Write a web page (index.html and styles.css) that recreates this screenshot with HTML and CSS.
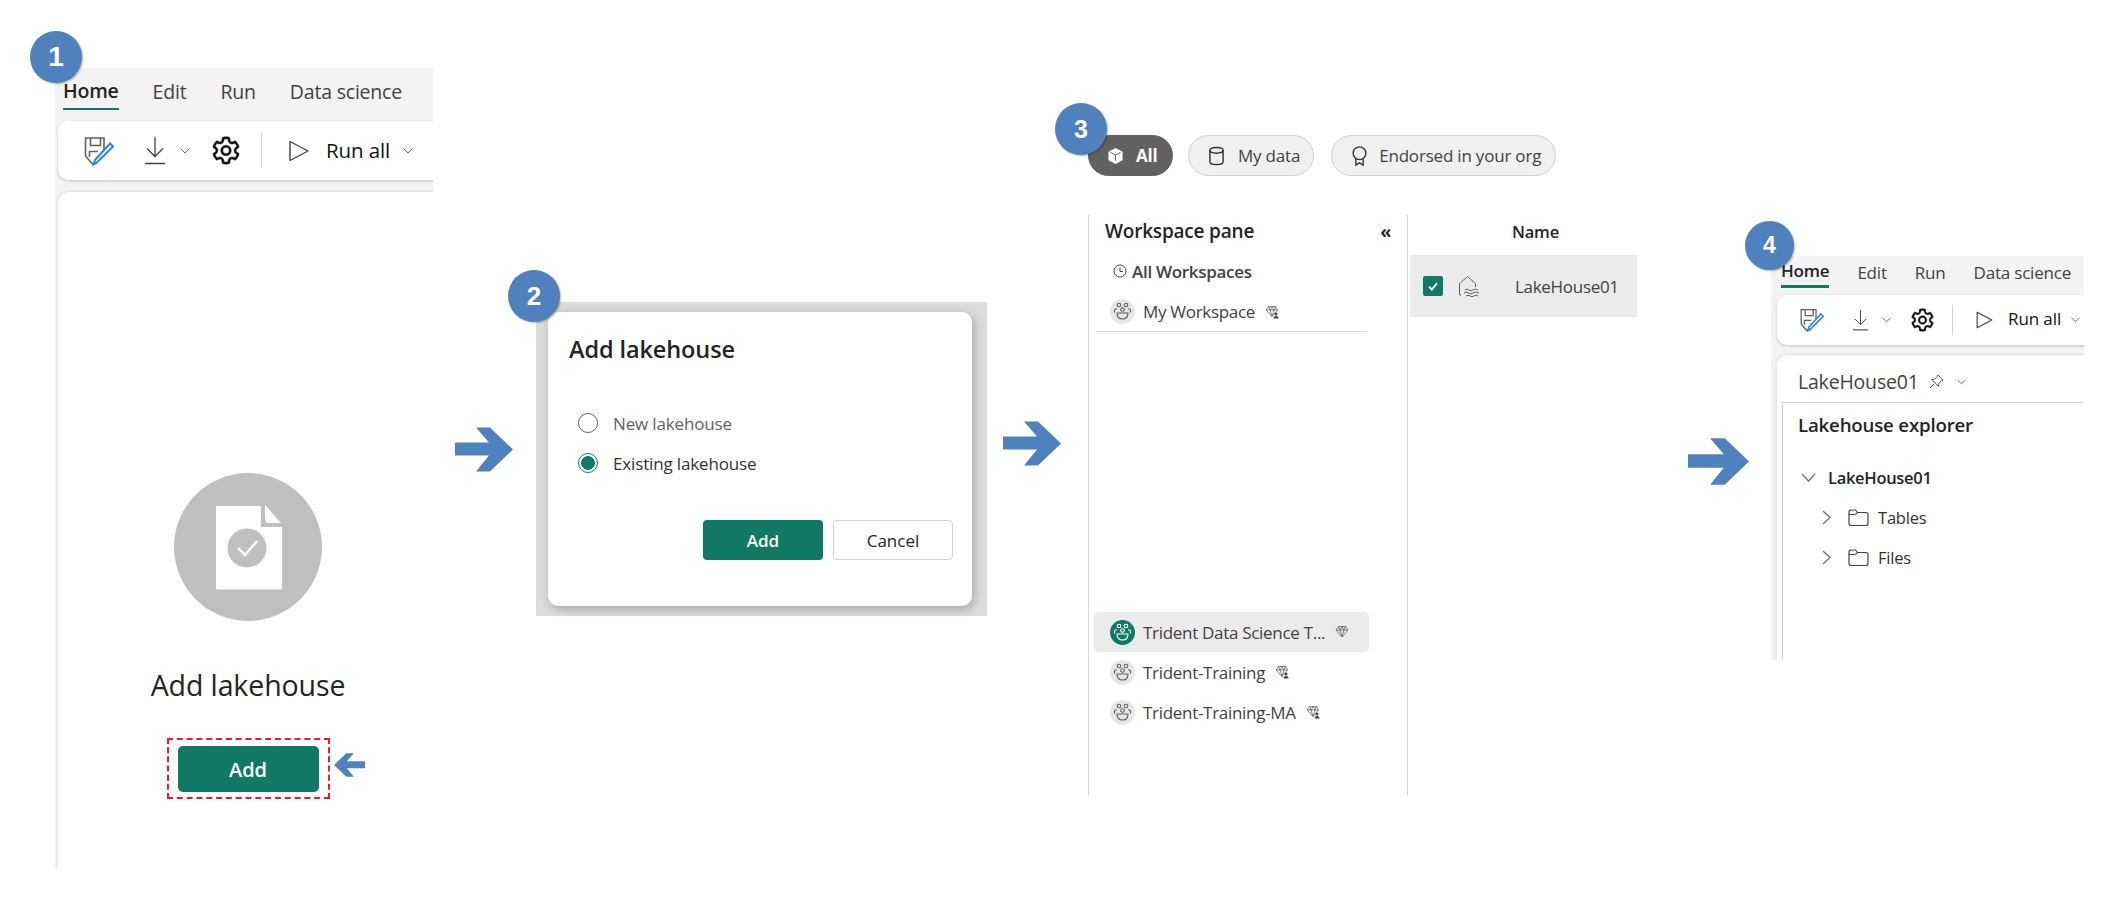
FILE: index.html
```html
<!DOCTYPE html>
<html lang="en">
<head>
<meta charset="utf-8">
<title>Add lakehouse steps</title>
<link rel="stylesheet" href="styles.css">
</head>
<body>
<svg class="defs" width="0" height="0" aria-hidden="true">
  <symbol id="i-arrow" viewBox="0 0 58 44"><polygon points="0,15 34,15 21,0 35,0 58,22 35,44 21,44 34,28 0,28"/></symbol>
  <symbol id="i-save" viewBox="0 0 30 30">
    <path d="M20 20.500V2H1.500V20L8 27.500H13" fill="none" stroke="#616161" stroke-width="1.600"/>
    <path d="M6.500 2V9.500H16.500V2" fill="none" stroke="#616161" stroke-width="1.600"/>
    <path d="M5.500 21V15.500H14" fill="none" stroke="#616161" stroke-width="1.600"/>
    <path d="M26 7.500L29 10.500 14 25.500 9.500 28.500 11 24Z" fill="#fff" stroke="#2b88d8" stroke-width="2"/>
  </symbol>
  <symbol id="i-down" viewBox="0 0 20 28">
    <path d="M10 0V19M2 11.500L10 19.500 18 11.500" fill="none" stroke="#424242" stroke-width="1.300"/>
    <path d="M0 26.500H20" stroke="#424242" stroke-width="1.500"/>
  </symbol>
  <symbol id="i-chev-d" viewBox="0 0 10 6"><path d="M.5.500L5 5 9.500.500" fill="none" stroke="#616161" stroke-width="1"/></symbol>
  <symbol id="i-chev-r" viewBox="0 0 9 15"><path d="M1 1L8 7.500 1 14" fill="none" stroke="#707070" stroke-width="1.300"/></symbol>
  <symbol id="i-gear" viewBox="2 2 20 20"><path fill="#111" stroke="#111" stroke-width=".35" d="M12.012 2.250c.734.008 1.465.093 2.182.253a.75.75 0 0 1 .582.649l.17 1.527a1.384 1.384 0 0 0 1.927 1.116l1.401-.615a.75.75 0 0 1 .85.174 9.792 9.792 0 0 1 2.204 3.792.75.75 0 0 1-.271.825l-1.242.916a1.381 1.381 0 0 0 0 2.226l1.243.915a.75.75 0 0 1 .272.826 9.797 9.797 0 0 1-2.204 3.792.75.75 0 0 1-.848.175l-1.407-.617a1.380 1.380 0 0 0-1.926 1.114l-.169 1.526a.75.75 0 0 1-.572.647 9.518 9.518 0 0 1-4.406 0 .75.75 0 0 1-.572-.647l-.168-1.524a1.382 1.382 0 0 0-1.926-1.110l-1.406.616a.75.75 0 0 1-.849-.175 9.798 9.798 0 0 1-2.204-3.796.75.75 0 0 1 .272-.826l1.243-.916a1.380 1.380 0 0 0 0-2.226l-1.243-.914a.75.75 0 0 1-.271-.826 9.793 9.793 0 0 1 2.204-3.792.75.75 0 0 1 .85-.174l1.400.615a1.387 1.387 0 0 0 1.930-1.118l.17-1.526a.75.75 0 0 1 .583-.650c.717-.159 1.450-.243 2.201-.252Zm0 1.500a9.135 9.135 0 0 0-1.354.117l-.109.977A2.886 2.886 0 0 1 6.525 7.170l-.898-.394a8.293 8.293 0 0 0-1.348 2.317l.798.587a2.881 2.881 0 0 1 0 4.643l-.799.588c.32.842.776 1.626 1.348 2.322l.905-.397a2.882 2.882 0 0 1 4.017 2.318l.11.984c.889.15 1.798.15 2.687 0l.11-.984a2.881 2.881 0 0 1 4.018-2.322l.905.396a8.296 8.296 0 0 0 1.347-2.318l-.798-.588a2.881 2.881 0 0 1 0-4.643l.796-.587a8.293 8.293 0 0 0-1.348-2.317l-.896.393a2.884 2.884 0 0 1-4.023-2.324l-.11-.976a8.988 8.988 0 0 0-1.333-.117ZM12 8.250a3.750 3.750 0 1 1 0 7.500 3.750 3.750 0 0 1 0-7.500Zm0 1.500a2.250 2.250 0 1 0 0 4.500 2.250 2.250 0 0 0 0-4.500Z"/></symbol>
  <symbol id="i-play" viewBox="0 0 20 22"><path d="M1 1.500V20.500L19 11Z" fill="none" stroke="#424242" stroke-width="1.400" stroke-linejoin="round"/></symbol>
  <symbol id="i-avatar" viewBox="0 0 25 25">
    <g fill="none" stroke="currentColor" stroke-width="1.100">
      <circle cx="9" cy="6" r="1.800"/><circle cx="16" cy="6" r="1.800"/><circle cx="12.500" cy="10.500" r="1.800"/>
      <path d="M4.500 13.500V11.500Q4.500 9.800 7 9.800M20.500 13.500V11.500Q20.500 9.800 18 9.800"/>
      <path d="M7 14H18Q18 20 12.500 20T7 14Z"/>
    </g>
  </symbol>
  <symbol id="i-gem" viewBox="0 0 14 14">
    <path d="M3.500 1.500H10.500L13 5 7 12 1 5ZM1 5H13M5 5L7 12 9 5M3.500 1.500L5 5 7 1.500 9 5 10.500 1.500" fill="none" stroke="#616161" stroke-width=".8"/>
  </symbol>
  <symbol id="i-gem-user" viewBox="0 0 14 14">
    <path d="M3.500 1.500H10.500L12.500 5 7 11.500 1 5ZM1 5H12.500M5 5L7 11.500 9 5M3.500 1.500L5 5 7 1.500 9 5 10.500 1.500" fill="none" stroke="#616161" stroke-width=".8"/>
    <circle cx="11" cy="9" r="1.500" fill="#424242"/><path d="M8.500 13.500Q8.500 11 11 11T13.500 13.500Z" fill="#424242"/>
  </symbol>
  <symbol id="i-folder" viewBox="0 0 21 17"><path d="M1 14.500V3Q1 1 3 1H7.500L9.500 3.500H18Q20 3.500 20 5.500V14.500Q20 16.500 18 16.500H3Q1 16.500 1 14.500ZM1 5.500H6.500Q8 5.500 9.500 3.500" fill="none" stroke="#424242" stroke-width="1.200"/></symbol>
</svg>

<main class="canvas">
  <section class="nb nb-large">
    <nav class="tabs">
      <span class="tab tab-on">Home</span><span class="tab">Edit</span><span class="tab">Run</span><span class="tab">Data science</span>
    </nav>
    <div class="toolbar">
      <svg class="ic-save"><use href="#i-save"/></svg>
      <svg class="ic-down"><use href="#i-down"/></svg>
      <svg class="ic-chev"><use href="#i-chev-d"/></svg>
      <svg class="ic-gear"><use href="#i-gear"/></svg>
      <span class="tool-sep"></span>
      <svg class="ic-play"><use href="#i-play"/></svg>
      <span class="run">Run all</span>
      <svg class="ic-chev ic-chev-run"><use href="#i-chev-d"/></svg>
    </div>
    <div class="nb-card empty">
      <svg class="hero" viewBox="0 0 148 148">
        <circle cx="74" cy="74" r="74" fill="#bfbfbf"/>
        <path d="M42 33H87V54H108V115Q108 116.500 106.500 116.500H43.500Q42 116.500 42 115Z" fill="#fff"/>
        <path d="M91 32V46Q91 50 95 50H107Z" fill="#fff"/>
        <circle cx="73" cy="75" r="19.500" fill="#bfbfbf"/>
        <path d="M64 75L71 82 83 68" fill="none" stroke="#fff" stroke-width="2.500"/>
      </svg>
      <h2 class="empty-title">Add lakehouse</h2>
      <div class="dash"><button class="btn btn-wide">Add</button></div>
    </div>
  </section>

  <section class="dialog-shot">
    <div class="dialog">
      <h2 class="dialog-title">Add lakehouse</h2>
      <label class="radio-row radio-muted"><span class="radio"></span>New lakehouse</label>
      <label class="radio-row"><span class="radio radio-on"></span>Existing lakehouse</label>
      <div class="dialog-actions">
        <button class="btn btn-dialog">Add</button>
        <button class="btn btn-dialog btn-ghost">Cancel</button>
      </div>
    </div>
  </section>

  <div class="pills">
    <span class="pill pill-on">
      <svg class="ic-pill" viewBox="0 0 18 18"><path d="M9 .5L16.500 4.500V13.500L9 17.500 1.500 13.500V4.500Z" fill="#fff"/><path d="M3.500 5L9 8 14.500 5M9 8V14" fill="none" stroke="#616161" stroke-width="1"/></svg>All
    </span>
    <span class="pill">
      <svg class="ic-pill" viewBox="0 0 18 20"><ellipse cx="9" cy="4" rx="7" ry="3" fill="none" stroke="#333" stroke-width="1.500"/><path d="M2 4V16C2 18 5 19 9 19S16 18 16 16V4" fill="none" stroke="#333" stroke-width="1.500"/></svg>My data
    </span>
    <span class="pill">
      <svg class="ic-pill" viewBox="0 0 18 22"><circle cx="9" cy="8" r="7" fill="none" stroke="#333" stroke-width="1.500"/><path d="M5 14V21L9 18.500 13 21V14" fill="none" stroke="#333" stroke-width="1.500"/></svg>Endorsed in your org
    </span>
  </div>

  <section class="browser">
    <div class="pane">
      <div class="pane-head"><strong>Workspace pane</strong><span class="collapse">«</span></div>
      <div class="ws-all">
        <svg class="ic-clock" viewBox="0 0 14 14"><circle cx="7" cy="7" r="6" fill="none" stroke="#424242" stroke-width="1"/><path d="M7 3.500V7.500H10" fill="none" stroke="#424242" stroke-width="1"/></svg>All Workspaces
      </div>
      <div class="ws-row ws-mine">
        <span class="avatar"><svg class="ic-avatar"><use href="#i-avatar"/></svg></span>My Workspace
        <svg class="ic-gem"><use href="#i-gem-user"/></svg>
      </div>
      <div class="ws-gap"></div>
      <div class="ws-row ws-selected">
        <span class="avatar avatar-on"><svg class="ic-avatar"><use href="#i-avatar"/></svg></span>Trident Data Science T...
        <svg class="ic-gem"><use href="#i-gem"/></svg>
      </div>
      <div class="ws-row">
        <span class="avatar"><svg class="ic-avatar"><use href="#i-avatar"/></svg></span>Trident-Training
        <svg class="ic-gem"><use href="#i-gem-user"/></svg>
      </div>
      <div class="ws-row">
        <span class="avatar"><svg class="ic-avatar"><use href="#i-avatar"/></svg></span>Trident-Training-MA
        <svg class="ic-gem"><use href="#i-gem-user"/></svg>
      </div>
    </div>
    <div class="results">
      <div class="results-head">Name</div>
      <div class="result-row">
        <span class="check"><svg viewBox="0 0 12 12"><path d="M2.500 6.500L5 9 9.500 3.500" fill="none" stroke="#fff" stroke-width="1.600"/></svg></span>
        <svg class="ic-lake" viewBox="0 0 22 22">
          <path d="M3 20H1.500V8.500L9.500 1.500 17.500 8.500V12" fill="none" stroke="#616161" stroke-width="1"/>
          <path d="M7 15Q9 13 11 15T15 15T20 15M6 18Q8 16 10.500 18T15 18T21 18M8 21Q10 19.500 12 21T16 21T20 21" fill="none" stroke="#616161" stroke-width="1"/>
        </svg>
        <span class="result-name">LakeHouse01</span>
      </div>
    </div>
  </section>

  <section class="nb nb-small">
    <nav class="tabs">
      <span class="tab tab-on">Home</span><span class="tab">Edit</span><span class="tab">Run</span><span class="tab">Data science</span>
    </nav>
    <div class="toolbar">
      <svg class="ic-save"><use href="#i-save"/></svg>
      <svg class="ic-down"><use href="#i-down"/></svg>
      <svg class="ic-chev"><use href="#i-chev-d"/></svg>
      <svg class="ic-gear"><use href="#i-gear"/></svg>
      <span class="tool-sep"></span>
      <svg class="ic-play"><use href="#i-play"/></svg>
      <span class="run">Run all</span>
      <svg class="ic-chev ic-chev-run"><use href="#i-chev-d"/></svg>
    </div>
    <div class="nb-card lake">
      <div class="lake-head">
        LakeHouse01
        <svg class="ic-pin" viewBox="0 0 16 16"><path d="M9.500 1L15 6.500 13.500 7 10.500 10 10 13 3 6 6 5.500 9 2.500ZM5.500 10.500L1 15" fill="none" stroke="#424242" stroke-width="1"/></svg>
        <svg class="ic-chev ic-chev-lake"><use href="#i-chev-d"/></svg>
      </div>
      <div class="explorer">
        <h3 class="explorer-title">Lakehouse explorer</h3>
        <div class="tree-root">
          <svg class="ic-tree-open" viewBox="0 0 15 9"><path d="M1 1L7.500 8 14 1" fill="none" stroke="#707070" stroke-width="1.200"/></svg>LakeHouse01
        </div>
        <div class="tree-item"><svg class="ic-tree"><use href="#i-chev-r"/></svg><svg class="ic-folder"><use href="#i-folder"/></svg>Tables</div>
        <div class="tree-item"><svg class="ic-tree"><use href="#i-chev-r"/></svg><svg class="ic-folder"><use href="#i-folder"/></svg>Files</div>
      </div>
    </div>
  </section>

  <span class="badge badge-1">1</span>
  <span class="badge badge-2">2</span>
  <span class="badge badge-3">3</span>
  <span class="badge badge-4">4</span>

  <svg class="arrow arrow-add"><use href="#i-arrow"/></svg>
  <svg class="arrow arrow-1"><use href="#i-arrow"/></svg>
  <svg class="arrow arrow-2"><use href="#i-arrow"/></svg>
  <svg class="arrow arrow-3"><use href="#i-arrow"/></svg>
</main>
</body>
</html>
```
FILE: styles.css
```css
* { box-sizing: border-box; }
html, body { margin: 0; background: #fff; }
body { font-family: "Open Sans", "Noto Sans", sans-serif; color: #242424; overflow: hidden; }
.defs { position: absolute; }
.canvas { position: relative; width: 2106px; height: 897px; overflow: hidden; }
svg { display: block; flex: none; }

/* notebook shots */
.nb { position: absolute; background: #f3f3f3; overflow: hidden; display: flex; flex-direction: column; }
.nb-large { left: 55px; top: 68px; width: 378px; height: 800px; padding-left: 3px; }
.nb-small { left: 1771px; top: 256px; width: 313px; height: 404px; padding-left: 6px; }

.tabs { display: flex; }
.nb-large .tabs { height: 42px; padding-left: 5px; gap: 34px; font-size: 19.500px; letter-spacing: -.2px; }
.nb-small .tabs { height: 32px; padding-left: 4px; gap: 28px; font-size: 17px; letter-spacing: -.2px; }
.tab { color: #424242; display: flex; align-items: center; height: 100%; padding-top: 4px; }
.nb-small .tab { padding-top: 0; }
.tab-on { color: #242424; font-weight: 600; border-bottom: 2px solid #117865; }
.nb-small .tab-on { border-bottom-width: 3px; }

.toolbar { display: flex; align-items: center; background: #fff; color: #111; box-shadow: 0 1px 3px rgba(0,0,0,.2); }
.nb-large .toolbar { height: 59px; margin-top: 11px; border-radius: 10px 0 0 10px; padding-left: 26px; width: 380px; flex: none; }
.nb-small .toolbar { height: 50px; margin-top: 7px; border-radius: 10px 0 0 10px; padding-left: 23px; width: 310px; flex: none; }

.nb-large .ic-save { width: 30px; height: 30px; }
.nb-large .ic-down { width: 20px; height: 28px; margin-left: 31px; }
.nb-large .ic-chev { width: 10px; height: 6px; margin-left: 15px; }
.nb-large .ic-gear { width: 28px; height: 29px; margin-left: 22px; }
.nb-large .tool-sep { width: 1px; height: 35px; background: #d1d1d1; margin-left: 21px; }
.nb-large .ic-play { width: 20px; height: 22px; margin-left: 27px; }
.nb-large .run { font-size: 20.500px; line-height: 24px; margin: -2px 0 0 17px; letter-spacing: -.1px; }
.nb-large .ic-chev-run { margin-left: 13px; }

.nb-small .ic-save { width: 24px; height: 24px; }
.nb-small .ic-down { width: 17px; height: 21px; margin-left: 28px; }
.nb-small .ic-chev { width: 9px; height: 6px; margin-left: 13px; }
.nb-small .ic-gear { width: 23px; height: 24px; margin-left: 20px; }
.nb-small .tool-sep { width: 1px; height: 30px; background: #d1d1d1; margin-left: 18px; }
.nb-small .ic-play { width: 17px; height: 18px; margin-left: 23px; }
.nb-small .run { font-size: 17px; line-height: 22px; margin: -2px 0 0 15px; letter-spacing: -.1px; }
.nb-small .ic-chev-run { margin-left: 10px; }

.nb-card { background: #fff; flex: 1; box-shadow: 0 0 3px rgba(0,0,0,.15); }
.nb-large .nb-card { margin-top: 12px; width: 380px; flex: 1; border-radius: 10px 0 0 0; }
.nb-small .nb-card { margin-top: 10px; width: 310px; border-radius: 10px 0 0 0; }

.empty { display: flex; flex-direction: column; align-items: center; padding-top: 281px; }
.hero { width: 148px; height: 148px; }
.empty-title { margin: 46px 0 35px; font-size: 28.500px; line-height: 36px; font-weight: 500; letter-spacing: -.1px; }
.dash { width: 163px; height: 61px; border: 2px dashed #e81b2c; padding-top: 6px; display: flex; justify-content: center; }

.btn { font-family: inherit; border: 0; border-radius: 4px; background: #117865; color: #fff; font-weight: 600; padding: 0; }
.btn-wide { width: 141px; height: 46px; font-size: 20px; border-radius: 5px; }

/* dialog shot */
.dialog-shot { position: absolute; left: 536px; top: 302px; width: 451px; height: 314px; background: #dcdcdc; padding: 10px 15px 10px 12px; }
.dialog { height: 100%; background: #fff; border-radius: 10px; padding: 21px 19px 0 21px; box-shadow: 2px 3px 10px rgba(0,0,0,.25); }
.dialog-title { margin: 0 0 38px; font-size: 23.500px; line-height: 32px; font-weight: 600; letter-spacing: -.1px; }
.radio-row { display: flex; align-items: center; gap: 15px; height: 40px; padding-left: 9px; font-size: 17px; letter-spacing: -.15px; color: #333; }
.radio-muted { color: #616161; }
.radio { width: 20px; height: 20px; border-radius: 50%; border: 1px solid #616161; background: #fff; flex: none; }
.radio-on { border-color: #117865; background: radial-gradient(circle, #117865 0 6.500px, #fff 7.200px); }
.dialog-actions { display: flex; justify-content: flex-end; gap: 10px; margin-top: 37px; }
.btn-dialog { width: 120px; height: 40px; font-size: 17px; }
.btn-ghost { background: #fff; color: #242424; border: 1px solid #d1d1d1; font-weight: 500; }

/* OneLake filter pills */
.pills { position: absolute; left: 1088px; top: 135px; display: flex; gap: 15px; font-size: 17px; color: #424242; }
.pill { height: 41px; display: flex; align-items: center; border: 1px solid #d1d1d1; border-radius: 21px; background: #f0f0f0; padding: 0 13px 0 19px; gap: 13px; letter-spacing: -.2px; }
.pill:nth-child(3) { margin-left: 2px; padding-left: 19px; gap: 11px; padding-right: 14px; }
.pill-on { background: #616161; border-color: #616161; color: #fff; font-weight: 700; width: 85px; padding-left: 18px; gap: 12px; }
.ic-pill { width: 17px; height: 20px; }

.browser { position: absolute; left: 1088px; top: 215px; height: 580px; display: flex; font-size: 17px; }
.pane { width: 320px; border-left: 1px solid #d6d6d6; border-right: 1px solid #d6d6d6; display: flex; flex-direction: column; color: #424242; }
.pane-head { height: 37px; padding: 0 16px 5px 16px; display: flex; align-items: center; justify-content: space-between; color: #242424; font-size: 19px; letter-spacing: -.2px; }
.pane-head strong { font-weight: 600; }
.collapse { font-size: 18px; font-weight: 700; }
.ws-all { height: 40px; display: flex; align-items: center; padding: 0 0 2px 24px; gap: 5px; font-weight: 600; letter-spacing: -.3px; }
.ic-clock { width: 14px; height: 14px; }
.ws-row { height: 40px; display: flex; align-items: center; margin-left: 5px; width: 275px; padding-left: 16px; border-radius: 5px; letter-spacing: -.3px; white-space: nowrap; flex: none; }
.ws-mine { margin-left: 7px; width: 271px; padding-left: 14px; border-radius: 0; border-bottom: 1px solid #d6d6d6; }
.ws-gap { height: 280px; flex: none; }
.ws-selected { background: #ebebeb; }
.avatar { width: 25px; height: 25px; border-radius: 50%; background: #e6e6e6; color: #616161; margin-right: 8px; flex: none; }
.avatar-on { background: #117865; color: #fff; }
.ic-avatar { width: 25px; height: 25px; }
.ic-gem { width: 14px; height: 14px; margin-left: 10px; }

.results { width: 230px; padding-left: 2px; }
.results-head { height: 40px; display: flex; align-items: center; padding: 0 0 7px 102px; font-size: 16.500px; font-weight: 600; color: #242424; letter-spacing: -.2px; }
.result-row { height: 62px; width: 227px; background: #ebebeb; display: flex; align-items: center; padding-left: 13px; color: #424242; letter-spacing: -.3px; }
.check { width: 20px; height: 20px; border-radius: 2px; background: #117865; padding: 3px; flex: none; }
.ic-lake { width: 22px; height: 22px; margin-left: 15px; }
.result-name { margin-left: 35px; }

/* lakehouse explorer */
.lake { display: flex; flex-direction: column; }
.lake-head { height: 47px; flex: none; display: flex; align-items: center; padding: 6px 0 0 21px; font-size: 19.500px; color: #424242; letter-spacing: -.2px; }
.ic-pin { width: 15px; height: 15px; margin-left: 10px; }
.ic-chev-lake { width: 9px; height: 6px; margin-left: 23px; }
.explorer { flex: 1; margin-left: 5px; border-left: 1px solid #d6d6d6; border-top: 1px solid #d6d6d6; padding-left: 15px; }
.explorer-title { margin: 8px 0 18px; font-size: 18.700px; line-height: 28px; font-weight: 600; letter-spacing: -.2px; }
.tree-root { height: 40px; display: flex; align-items: center; font-size: 16.500px; font-weight: 600; letter-spacing: -.3px; gap: 12px; padding-left: 3px; }
.ic-tree-open { width: 15px; height: 9px; }
.tree-item { height: 40px; display: flex; align-items: center; font-size: 16.500px; padding-left: 24px; color: #333; letter-spacing: -.2px; }
.ic-tree { width: 9px; height: 15px; }
.ic-folder { width: 21px; height: 17px; margin: 0 9px 0 17px; }

/* overlays */
.badge { position: absolute; border-radius: 50%; background: #4f81bd; color: #fff; display: flex; align-items: center; justify-content: center; font-family: "Liberation Sans", Arial, sans-serif; font-weight: 700; box-shadow: 1px 1px 2px rgba(0,0,0,.3); }
.badge-1 { left: 30px; top: 31px; width: 52px; height: 52px; font-size: 28px; }
.badge-2 { left: 508px; top: 270px; width: 52px; height: 52px; font-size: 26px; }
.badge-3 { left: 1055px; top: 103px; width: 52px; height: 52px; font-size: 25px; }
.badge-4 { left: 1745px; top: 221px; width: 49px; height: 49px; font-size: 23px; }

.arrow { position: absolute; fill: #4f81bd; }
.arrow-add { left: 334px; top: 753px; width: 31px; height: 24px; transform: scaleX(-1); }
.arrow-1 { left: 455px; top: 427px; width: 58px; height: 45px; }
.arrow-2 { left: 1003px; top: 421px; width: 58px; height: 45px; }
.arrow-3 { left: 1688px; top: 438px; width: 61px; height: 47px; }
```
